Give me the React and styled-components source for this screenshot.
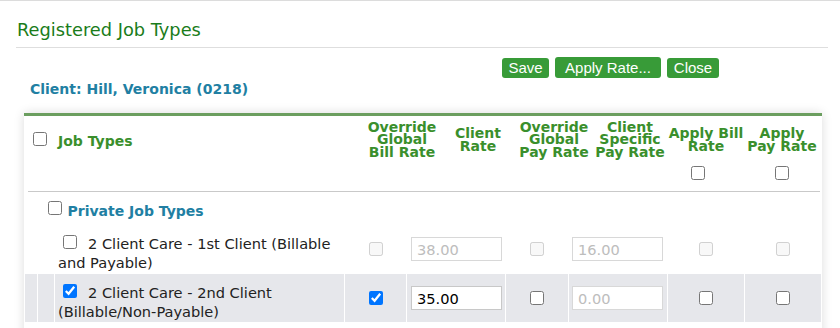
import styled, { createGlobalStyle } from 'styled-components'

const GlobalStyle = createGlobalStyle`
	* { box-sizing: border-box; }
	body {
		margin: 0;
		background: #fff;
		font-family: "DejaVu Sans", Verdana, sans-serif;
		font-size: 14px;
		color: #222;
	}
`

const Page = styled.div`
	border-top: 1px solid #dcdcdc;
	padding: 0 12px 0 16px;
	height: 328px;
	overflow: hidden;
`

const Title = styled.h2`
	margin: 0;
	padding: 18px 0 7px 1px;
	border-bottom: 1px solid #dedede;
	font-size: 17.8px;
	font-weight: normal;
	line-height: 21px;
	color: #1a7c1a;
`

const Toolbar = styled.div`
	display: flex;
	align-items: flex-end;
	gap: 6px;
	margin-top: 9px;
	padding-left: 486px;
	height: 21px;
`

const Button = styled.button`
	width: ${(p) => p.$w}px;
	height: ${(p) => (p.$tall ? 21 : 20)}px;
	padding: 0;
	border: none;
	border-radius: 3px;
	background: #389b38;
	color: #fff;
	font-family: "Liberation Sans", Arial, sans-serif;
	font-size: 15px;
	line-height: 20px;
	text-align: center;
`

const ClientLabel = styled.div`
	margin-top: 3px;
	padding-left: 14px;
	font-weight: bold;
	line-height: 17px;
	color: #217fa3;
`

const Card = styled.div`
	margin: 15px 0 0 8px;
	width: 798px;
	background: #fff;
	border-top: 3px solid #6b9e5f;
	box-shadow: 0 0 10px rgba(0, 0, 0, 0.14);
	padding-bottom: 20px;
`

const HeadRow = styled.div`
	display: grid;
	grid-template-columns: 336px repeat(6, 76px);
	height: 76px;
	margin: 0 2px 0 4px;
	border-bottom: 1px solid #c9c9c9;
	font-weight: bold;
	color: #3a8f2c;
`

const JobHead = styled.div`
	display: flex;
	align-items: flex-start;
	padding-top: 15px;
	line-height: 17px;

	& input {
		margin: 1px 11px 0 5px;
	}
	& span {
		margin-top: 2px;
	}
`

const ColHead = styled.div`
	display: flex;
	flex-direction: column;
	align-items: center;
	padding-top: 5px;
`

const HeadLabel = styled.div`
	height: 37.5px;
	display: flex;
	align-items: center;
	justify-content: center;
	text-align: center;
	line-height: 12.8px;
	white-space: nowrap;
`

const Check = styled.input.attrs({ type: 'checkbox' })`
	width: 14px;
	height: 14px;
	margin: 0;
	accent-color: #0075ff;
	flex: none;
`

const HeadCheck = styled(Check)`
	margin-top: 7.5px;
	margin-right: ${(p) => p.$shift || 0}px;
`

const GroupRow = styled.div`
	display: flex;
	align-items: flex-start;
	height: 33px;
	margin: 0 1px;
	padding: 8.5px 0 0 23px;
	font-weight: bold;
	line-height: 17px;
	color: #217fa3;

	& span {
		margin: 2.5px 0 0 5.5px;
	}
`

const JobRow = styled.div`
	display: grid;
	grid-template-columns: 12px 16px 289px 61px 98px 62px 98px 76px 76px;
	column-gap: 1px;
	height: 48px;
	margin: 0 1px 1px;
`

const Cell = styled.div`
	display: flex;
	align-items: center;
	justify-content: ${(p) => (p.$pad !== undefined ? 'flex-start' : 'center')};
	padding-left: ${(p) => p.$pad || 0}px;
	background: ${(p) => (p.$shaded ? '#e6e7eb' : 'transparent')};
`

const JobCell = styled.div`
	padding: 9px 4px 0 3px;
	font-size: 14.6px;
	line-height: 19px;
	color: #222;
	background: ${(p) => (p.$shaded ? '#e6e7eb' : 'transparent')};

	& input {
		vertical-align: baseline;
		margin: 0 11px 0 5px;
	}
`

const RateInput = styled.input`
	width: 91px;
	height: 24px;
	padding: 0 5px;
	border: 1px solid ${(p) => (p.disabled ? '#d8d8d8' : '#c8c8c8')};
	border-radius: 0;
	background: #fff;
	font-family: "DejaVu Sans", Verdana, sans-serif;
	font-size: 14.6px;
	color: ${(p) => (p.disabled ? '#bdbdbd' : '#000')};
	outline: none;

	&:disabled {
		background: #fff;
		color: #bdbdbd;
	}
`

const rows = [
	{
		name: '2 Client Care - 1st Client (Billable and Payable)',
		selected: false,
		overrideBill: false,
		clientRate: '38.00',
		overridePay: false,
		payRate: '16.00',
	},
	{
		name: '2 Client Care - 2nd Client (Billable/Non-Payable)',
		selected: true,
		overrideBill: true,
		clientRate: '35.00',
		overridePay: false,
		payRate: '0.00',
	},
]

const Row = ({ row, shaded }) => {
	const off = !row.selected
	return (
		<JobRow>
			<Cell $shaded={shaded} />
			<Cell $shaded={shaded} />
			<JobCell $shaded={shaded}>
				<Check defaultChecked={row.selected} />
				{row.name}
			</JobCell>
			<Cell $shaded={shaded}>
				<Check disabled={off} defaultChecked={row.overrideBill} />
			</Cell>
			<Cell $shaded={shaded} $pad={4}>
				<RateInput disabled={off || !row.overrideBill} defaultValue={row.clientRate} />
			</Cell>
			<Cell $shaded={shaded}>
				<Check disabled={off} defaultChecked={row.overridePay} />
			</Cell>
			<Cell $shaded={shaded} $pad={3}>
				<RateInput disabled={off || !row.overridePay} defaultValue={row.payRate} />
			</Cell>
			<Cell $shaded={shaded}>
				<Check disabled={off} />
			</Cell>
			<Cell $shaded={shaded}>
				<Check disabled={off} />
			</Cell>
		</JobRow>
	)
}

export default function App() {
	return (
		<>
			<GlobalStyle />
			<Page>
				<Title>Registered Job Types</Title>
				<Toolbar>
					<Button $w={47}>Save</Button>
					<Button $w={106} $tall>
						Apply Rate...
					</Button>
					<Button $w={52}>Close</Button>
				</Toolbar>
				<ClientLabel>Client: Hill, Veronica (0218)</ClientLabel>
				<Card>
					<HeadRow>
						<JobHead>
							<Check />
							<span>Job Types</span>
						</JobHead>
						<ColHead>
							<HeadLabel>
								Override
								<br />
								Global
								<br />
								Bill Rate
							</HeadLabel>
						</ColHead>
						<ColHead>
							<HeadLabel>
								Client
								<br />
								Rate
							</HeadLabel>
						</ColHead>
						<ColHead>
							<HeadLabel>
								Override
								<br />
								Global
								<br />
								Pay Rate
							</HeadLabel>
						</ColHead>
						<ColHead>
							<HeadLabel>
								Client
								<br />
								Specific
								<br />
								Pay Rate
							</HeadLabel>
						</ColHead>
						<ColHead>
							<HeadLabel>
								Apply Bill
								<br />
								Rate
							</HeadLabel>
							<HeadCheck $shift={16} />
						</ColHead>
						<ColHead>
							<HeadLabel>
								Apply
								<br />
								Pay Rate
							</HeadLabel>
							<HeadCheck />
						</ColHead>
					</HeadRow>
					<GroupRow>
						<Check />
						<span>Private Job Types</span>
					</GroupRow>
					{rows.map((row, i) => (
						<Row key={row.name} row={row} shaded={i % 2 === 1} />
					))}
				</Card>
			</Page>
		</>
	)
}
